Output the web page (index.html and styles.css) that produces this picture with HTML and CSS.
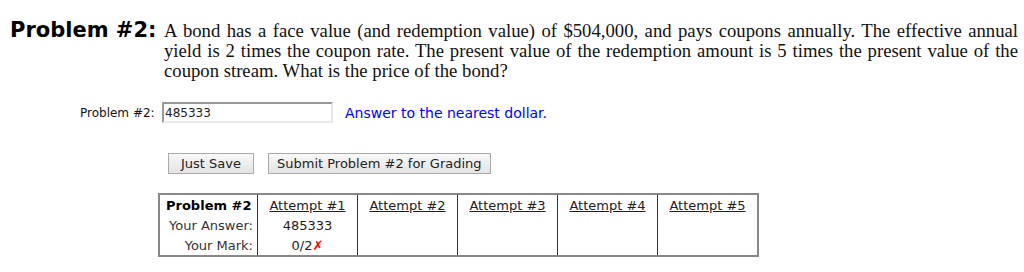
FILE: index.html
```html
<!DOCTYPE html>
<html lang="en">
<head>
    <meta charset="UTF-8">
    <title>Problem #2</title>
    <link rel="stylesheet" href="styles.css">
</head>
<body>
    <div class="problem">
        <div class="problem-title">Problem #2:</div>
        <div class="problem-text">A bond has a face value (and redemption value) of $504,000, and pays coupons annually. The effective annual yield is 2 times the coupon rate. The present value of the redemption amount is 5 times the present value of the coupon stream. What is the price of the bond?</div>
    </div>

    <div class="answer-row">
        <label for="answer">Problem #2:</label>
        <input type="text" id="answer" value="485333">
        <span class="hint">Answer to the nearest dollar.</span>
    </div>

    <div class="buttons">
        <button class="btn btn-save">Just Save</button>
        <button class="btn">Submit Problem #2 for Grading</button>
    </div>

    <table class="attempts">
        <tr>
            <th class="head">Problem #2</th>
            <td><a href="#">Attempt #1</a></td>
            <td><a href="#">Attempt #2</a></td>
            <td><a href="#">Attempt #3</a></td>
            <td><a href="#">Attempt #4</a></td>
            <td><a href="#">Attempt #5</a></td>
        </tr>
        <tr>
            <th>Your Answer:</th>
            <td>485333</td>
            <td></td><td></td><td></td><td></td>
        </tr>
        <tr>
            <th>Your Mark:</th>
            <td>0/2<span class="wrong">✗</span></td>
            <td></td><td></td><td></td><td></td>
        </tr>
    </table>
</body>
</html>
```

FILE: styles.css
```css
body {
    margin: 0;
    padding: 18px 6px 0 10px;
    font-family: "DejaVu Sans", Verdana, sans-serif;
    font-size: 12px;
    color: #000;
    background: #fff;
}

/* Problem statement */
.problem {
    display: flex;
    align-items: baseline;
}

.problem-title {
    font-size: 21px;
    font-weight: bold;
    width: 154px;
    flex-shrink: 0;
    line-height: 24px;
}

.problem-text {
    font-family: "Liberation Serif", "Times New Roman", serif;
    font-size: 18.7px;
    line-height: 20px;
    text-align: justify;
    color: #111;
}

/* Answer input */
.answer-row {
    display: flex;
    align-items: center;
    margin: 21px 0 0 70px;
}

.answer-row label {
    width: 82px;
    color: #111;
}

.answer-row input {
    box-sizing: border-box;
    width: 171px;
    height: 21px;
    padding: 1px 1px;
    border: 2px solid #e8e8e8;
    border-top-color: #999;
    border-left-color: #999;
    font-family: "DejaVu Sans", Verdana, sans-serif;
    font-size: 12px;
    color: #222;
}

.hint {
    color: #00f;
    font-size: 14px;
    margin-left: 12px;
}

/* Buttons */
.buttons {
    margin: 30px 0 0 158px;
    display: flex;
    gap: 14px;
}

.btn {
    box-sizing: border-box;
    font-family: "DejaVu Sans", Verdana, sans-serif;
    font-size: 13px;
    color: #222;
    background: linear-gradient(#f8f8f8, #e4e4e4);
    border: 1px solid #aaa;
    border-radius: 0;
    padding: 0 8px;
    height: 21px;
}

.btn-save {
    padding: 0 12px;
}

/* Attempts table */
.attempts {
    margin: 19px 0 0 148px;
    border: 2px solid #888;
    border-collapse: collapse;
    font-size: 13px;
}

.attempts th, .attempts td {
    height: 20px;
    padding: 0 6px;
    vertical-align: middle;
}

.attempts th {
    font-weight: normal;
    text-align: right;
    width: 87px;
    padding-right: 4px;
    color: #333;
    border-right: 1px solid #333;
}

.attempts th.head {
    font-weight: bold;
    color: #000;
    text-align: left;
}

.attempts td {
    width: 87px;
    text-align: center;
    border-right: 1px solid #333;
    color: #222;
}

.attempts a {
    color: #222;
}

.wrong {
    color: red;
    font-weight: bold;
}
```
